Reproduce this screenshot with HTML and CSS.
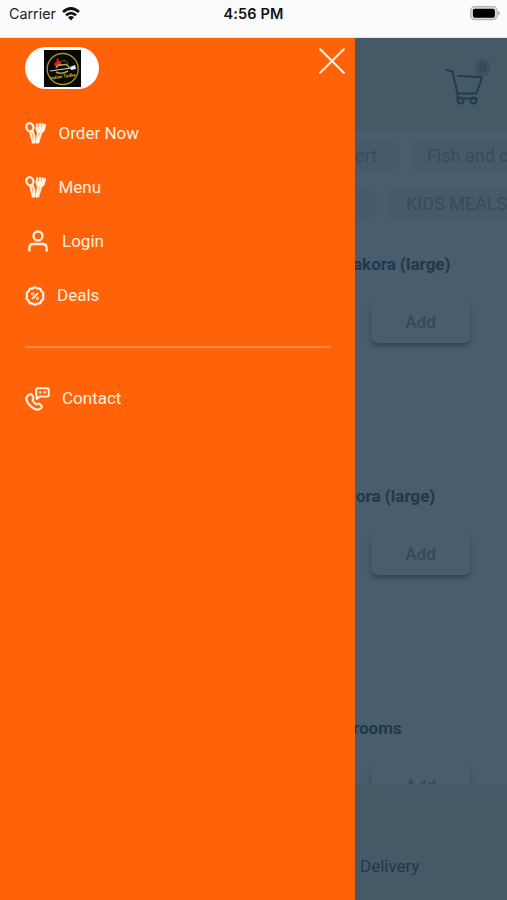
FILE: index.html
```html
<!DOCTYPE html>
<html lang="en">
<head>
<meta charset="utf-8">
<title>Menu</title>
<link rel="stylesheet" href="styles.css">
</head>
<body>
<header class="status">
  <div class="carrier"><span>Carrier</span>
    <svg width="18" height="14" viewBox="0 0 18 14" fill="none" stroke="#111" stroke-width="2.8"><path d="M1 5Q9-2 17 5M4 8.3Q9 4 14 8.3"/><path d="M6 10.3Q9 7.6 12 10.3L9 13.4Z" fill="#111" stroke="none"/></svg>
  </div>
  <div class="clock">4:56 PM</div>
  <svg class="battery" width="32" height="16" viewBox="0 0 32 16"><rect x="1.7" y="1.7" width="26.4" height="13" rx="4" fill="#ddd" stroke="#b5b5b5" stroke-width="1.2"/><rect x="3.9" y="3.7" width="22" height="9" rx="2" fill="#000"/><path d="M29 6Q32.5 8.2 29 10.5Z" fill="#aaa"/></svg>
</header>
<main class="screen">
  <nav class="drawer">
    <div class="drawer-head">
      <div class="logo">
        <svg width="37" height="37" viewBox="0 0 37 37"><rect width="37" height="37" fill="#080808"/><circle cx="18.7" cy="19" r="15.5" fill="none" stroke="#a39a20" stroke-width="1.3"/><path d="M10.5 16Q10 12 12.5 12Q12 9 14 7.5Q14 10 16 11.5Q18 13 17 16Z" fill="#e51c20"/><path d="M12 18Q14 14 18 15Q24 13 25 18M12 22Q17 25 24 21" fill="none" stroke="#b9a62a" stroke-width="1.5"/><path d="M16 12Q22 8 24 14" fill="none" stroke="#4b6327"/><path d="M6 21L27 18" stroke="#d8d8d0" stroke-width="1.2"/><path d="M26 17L31 15L32 19L27 20Z" fill="#eee"/><text x="18.8" y="28" text-anchor="middle" class="logo-text" transform="rotate(-8 18 27)">Indian Tadka</text></svg>
      </div>
      <svg class="close" width="26" height="26" viewBox="0 0 26 26" stroke="#fff0e2" stroke-width="2" stroke-linecap="round"><path d="M1.2 1.2L24.8 24.8M24.8 1.2L1.2 24.8"/></svg>
    </div>
    <a class="item"><svg width="21" height="22" viewBox="0 0 21 22"><use href="#cutlery"/></svg><span>Order Now</span></a>
    <a class="item"><svg width="21" height="22" viewBox="0 0 21 22"><use href="#cutlery"/></svg><span>Menu</span></a>
    <a class="item login"><svg width="20" height="22" viewBox="0 0 20 22" fill="none" stroke="#fff0df" stroke-width="2.3"><circle cx="10" cy="6" r="4.5"/><path d="M1.4 21.5V18Q1.4 14 5.4 14H14.6Q18.6 14 18.6 18V21.5"/></svg><span>Login</span></a>
    <a class="item deals"><svg width="20" height="20" viewBox="0 0 20 20" fill="none" stroke="#fff0df" stroke-width="2.3" stroke-linejoin="round"><path d="M10 1.2L12.5 2.4L15.2 2.8L16.3 5.1L18.4 7L18 10L18.4 13L16.3 14.9L15.2 17.2L12.5 17.6L10 18.8L7.5 17.6L4.8 17.2L3.7 14.9L1.6 13L2 10L1.6 7L3.7 5.1L4.8 2.8L7.5 2.4Z"/><path d="M13 7L7 13" stroke-width="2"/><circle cx="7.6" cy="7.8" r=".5"/><circle cx="12.4" cy="12.2" r=".5"/></svg><span>Deals</span></a>
    <hr class="rule">
    <a class="item contact"><svg width="25" height="24" viewBox="0 0 25 24" fill="none" stroke="#fff0df" stroke-width="2.1" stroke-linejoin="round"><path d="M4.5 7.4Q6 6.5 7 8L8.4 10.5Q9 11.7 7.5 13Q8.5 16 11.5 17.5Q13 16 14.2 16.8L16.4 18.6Q17.3 19.6 16.2 21Q13.5 24 9 21.5Q3 18 1.4 12.6Q1 9 4.5 7.4Z"/><path d="M12.4 1.2H22Q23.8 1.2 23.8 3V7.7Q23.8 9.5 22 9.5H15L11.8 12V9.5Q11.2 9 11.2 7.7V3Q11.2 1.2 12.4 1.2Z"/><path d="M14.2 5.4H16.4M18.6 5.4H20.8"/></svg><span>Contact</span></a>
  </nav>
  <section class="page">
    <div class="topbar">
      <div class="cart">
        <svg width="39" height="40" viewBox="0 0 39 40" fill="none" stroke="#203c50" stroke-width="2" stroke-linecap="round" stroke-linejoin="round"><path d="M1 4L6.5 5.5L11.5 27.5H30.5L36 11M12 10L34 11M11.5 27.5V32.5H31"/><circle cx="14.5" cy="34.5" r="3"/><circle cx="27.5" cy="34.5" r="3"/></svg>
        <span class="badge">0</span>
      </div>
    </div>
    <div class="chips first"><span class="chip">ert</span><span class="chip">Fish and chips</span></div>
    <div class="chips second"><span class="chip"></span><span class="chip">KIDS MEALS</span></div>
    <div class="products">
      <article class="product one"><h2>akora (large)</h2><button class="add">Add</button></article>
      <article class="product two"><h2>ora (large)</h2><button class="add">Add</button></article>
      <article class="product three"><h2>rooms</h2><button class="add">Add</button></article>
    </div>
    <footer class="bottom">Delivery</footer>
  </section>
</main>
<svg class="defs" width="0" height="0"><defs><g id="cutlery" fill="none" stroke="#fff0df" stroke-width="2.2" stroke-linecap="round" stroke-linejoin="round"><ellipse cx="4.9" cy="5.2" rx="3.5" ry="4.1" transform="rotate(-18 4.9 5.2)"/><path d="M5.2 9.6L7.8 20.4H9.6L9.2 14L7.4 9"/><path d="M12.4 2L11.6 6.2Q11.6 8.6 13.2 9.8L11.6 20.4H13.2L16 10.8Q18.2 9.9 18.9 7.5L20 3M15.2 2L14.5 6.5M17.8 2.4L16.9 7"/><path d="M12.2 6.2L18.8 7.2L15.4 10.4L13.2 9.6Z" fill="#fff0df"/></g></defs></svg>
</body>
</html>
```

FILE: styles.css
```css
* { box-sizing: border-box; }
body {
  margin: 0;
  width: 507px;
  height: 900px;
  overflow: hidden;
  font-family: Roboto, "Liberation Sans", sans-serif;
  font-size: 17px;
}
.status {
  height: 38px;
  padding: 5px 6px 0 9px;
  display: grid;
  grid-template-columns: 1fr auto 1fr;
  align-items: start;
  background: #fbfbfb;
  border-bottom: 1px solid #e5e2e0;
  font-family: Inter, sans-serif;
  font-size: 14.3px;
  line-height: 18px;
  color: #222;
}
.carrier { display: flex; gap: 6px; align-items: center; }
.carrier svg { margin-top: -1px; }
.clock { font-weight: 600; font-size: 14.5px; color: #111; letter-spacing: .15px; margin-left: -3px; }
.battery { justify-self: end; }
.screen { display: grid; grid-template-columns: 355px 152px; height: 862px; }
.drawer { background: #ff6208; color: #fff0df; padding: 9px 10px 0 25px; }
.drawer-head { display: flex; justify-content: space-between; height: 59px; }
.logo {
  width: 74px;
  height: 42px;
  border-radius: 21px;
  background: #fff;
  display: flex;
  align-items: center;
  justify-content: center;
}
.logo-text { font-size: 4.5px; font-weight: 700; fill: #c5b52a; }
.close { margin-top: 1px; }
.item { display: flex; align-items: center; gap: 12.5px; height: 54px; line-height: 20px; }
.item svg { flex: none; }
.login { padding-left: 3px; gap: 14px; }
.deals { gap: 12px; }
.deals svg { margin-top: 2px; }
.rule { width: 306px; height: 2px; margin: 24px 0 0; border: 0; background: #ff8a45; }
.contact { gap: 12px; margin-top: 23px; }
.contact svg { margin-top: 1px; }
.page {
  background: #485d6d;
  color: #1f394c;
  overflow: hidden;
  display: grid;
  grid-template-columns: 152px;
  grid-template-rows: 94px 56px 48px 548px 116px;
}
.topbar { background: #445b67; display: flex; justify-content: flex-end; padding: 28px 22px 0 0; }
.cart { position: relative; width: 39px; height: 40px; }
.badge {
  position: absolute;
  top: -7px;
  right: -5px;
  width: 15px;
  height: 17px;
  border-radius: 8px;
  background: #3c5060;
  color: #2c4254;
  font-size: 13px;
  line-height: 17px;
  text-align: center;
}
.chips { display: flex; width: 240px; }
.chip {
  height: 32px;
  border-radius: 8px;
  background: #465b6a;
  box-shadow: 0 0 3px #465b6a;
  color: #364b5b;
  font-size: 18px;
  line-height: 32px;
  white-space: nowrap;
}
.first { padding-top: 8px; gap: 16px; }
.first .chip:first-child { width: 43px; }
.first .chip:last-child { padding: 0 13px; }
.second { gap: 15px; }
.second .chip:first-child { width: 20px; }
.second .chip:last-child { padding: 0 16px; }
.products { overflow: hidden; }
.product { height: 232px; padding-top: 18px; }
.product h2 { margin: 0; font-size: 17px; line-height: 20px; font-weight: 700; white-space: nowrap; }
.one h2 { margin-left: -2px; }
.two h2 { margin-left: 1px; }
.three h2 { margin-left: -2px; }
.add {
  display: block;
  width: 99px;
  height: 41px;
  margin: 28px 0 0 16px;
  padding: 0;
  border: 0;
  border-radius: 6px;
  background: #485d6d;
  box-shadow: 0 3px 4px #304655;
  color: #344959;
  font: 500 17px/41px Roboto, sans-serif;
}
.bottom { background: #445b67; padding: 72px 0 0 5px; line-height: 20px; }
.defs { display: none; }
```
